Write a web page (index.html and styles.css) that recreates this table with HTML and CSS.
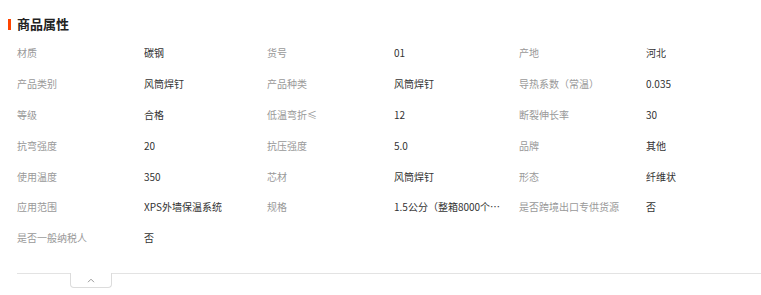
FILE: index.html
```html
<!DOCTYPE html>
<html lang="zh">
<head>
<meta charset="utf-8">
<link rel="stylesheet" href="styles.css">
</head>
<body>
<div class="section">
  <div class="title"><span class="bar"></span><h2>商品属性</h2></div>
  <div class="grid">
    <div class="cell"><span class="k">材质</span><span class="v">碳钢</span></div>
    <div class="cell"><span class="k">货号</span><span class="v">01</span></div>
    <div class="cell"><span class="k">产地</span><span class="v">河北</span></div>
    <div class="cell"><span class="k">产品类别</span><span class="v">风筒焊钉</span></div>
    <div class="cell"><span class="k">产品种类</span><span class="v">风筒焊钉</span></div>
    <div class="cell"><span class="k">导热系数（常温）</span><span class="v">0.035</span></div>
    <div class="cell"><span class="k">等级</span><span class="v">合格</span></div>
    <div class="cell"><span class="k">低温弯折≤</span><span class="v">12</span></div>
    <div class="cell"><span class="k">断裂伸长率</span><span class="v">30</span></div>
    <div class="cell"><span class="k">抗弯强度</span><span class="v">20</span></div>
    <div class="cell"><span class="k">抗压强度</span><span class="v">5.0</span></div>
    <div class="cell"><span class="k">品牌</span><span class="v">其他</span></div>
    <div class="cell"><span class="k">使用温度</span><span class="v">350</span></div>
    <div class="cell"><span class="k">芯材</span><span class="v">风筒焊钉</span></div>
    <div class="cell"><span class="k">形态</span><span class="v">纤维状</span></div>
    <div class="cell"><span class="k">应用范围</span><span class="v">XPS外墙保温系统</span></div>
    <div class="cell"><span class="k">规格</span><span class="v">1.5公分（整箱8000个装）</span></div>
    <div class="cell"><span class="k">是否跨境出口专供货源</span><span class="v">否</span></div>
    <div class="cell"><span class="k">是否一般纳税人</span><span class="v">否</span></div>
  </div>
  <div class="foot">
    <div class="tab"><svg width="8" height="5" viewBox="0 0 8 5"><path d="M1 4.2 L4 1.2 L7 4.2" fill="none" stroke="#999" stroke-width="1"/></svg></div>
  </div>
</div>
</body>
</html>
```

FILE: styles.css
```css
html, body {
  margin: 0;
  padding: 0;
  background: #fff;
  overflow: hidden;
}
body {
  font-family: "Noto Sans CJK SC", "Noto Sans", sans-serif;
  color: #333;
}
.section {
  padding: 16px 0 0 8px;
}
.title {
  display: flex;
  align-items: center;
  height: 16px;
}
.bar {
  width: 3px;
  height: 11px;
  background: #ff4400;
  margin-right: 6px;
}
.title h2 {
  margin: 0;
  font-size: 13px;
  font-weight: bold;
  color: #222;
  line-height: 16px;
}
.grid {
  display: grid;
  grid-template-columns: 250px 252px 251px;
  grid-auto-rows: 30.8px;
  padding: 6px 0 0 9px;
}
.cell {
  display: flex;
  align-items: center;
  font-size: 10px;
  line-height: 14px;
}
.k {
  width: 127px;
  flex: none;
  color: #999;
  white-space: nowrap;
}
.v {
  color: #333;
  max-width: 110px;
  white-space: nowrap;
  overflow: hidden;
  text-overflow: ellipsis;
}
.foot {
  margin: 19px 0 0 9px;
  border-top: 1px solid #e3e3e3;
  padding-left: 53px;
  height: 20px;
}
.tab {
  width: 42px;
  height: 15px;
  margin-top: -1px;
  background: #fff;
  border: 1px solid #dcdcdc;
  border-top: none;
  border-radius: 0 0 4px 4px;
  display: flex;
  justify-content: center;
  align-items: flex-start;
  padding-top: 5px;
  box-sizing: border-box;
}
.tab svg {
  display: block;
}
```
